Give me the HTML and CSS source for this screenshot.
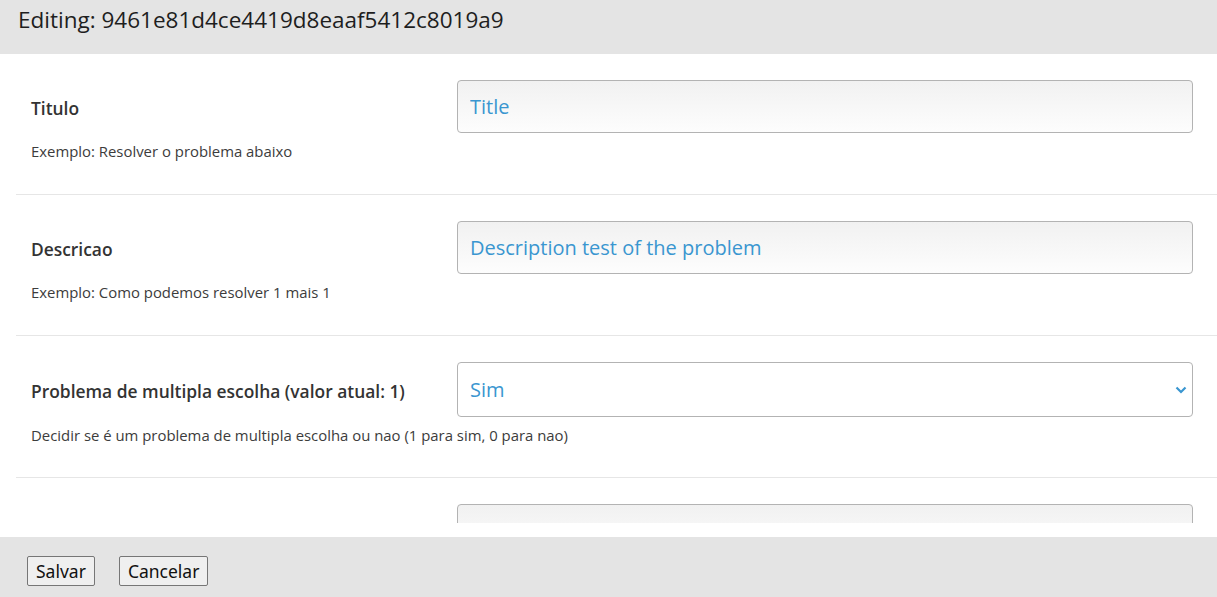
FILE: index.html
```html
<!DOCTYPE html>
<html lang="pt">
<head>
<meta charset="utf-8">
<title>Editing</title>
<link rel="stylesheet" href="styles.css">
</head>
<body>
<div class="page">
  <header class="topbar">Editing: 9461e81d4ce4419d8eaaf5412c8019a9</header>
  <main class="content">
    <div class="row">
      <div class="line">
        <div class="label">Titulo</div>
        <div class="field"><input class="text" type="text" value="Title"></div>
      </div>
      <div class="help">Exemplo: Resolver o problema abaixo</div>
    </div>
    <div class="row">
      <div class="line">
        <div class="label">Descricao</div>
        <div class="field"><input class="text" type="text" value="Description test of the problem"></div>
      </div>
      <div class="help">Exemplo: Como podemos resolver 1 mais 1</div>
    </div>
    <div class="row row-select">
      <div class="line">
        <div class="label">Problema de multipla escolha (valor atual: 1)</div>
        <div class="field">
          <div class="select-wrap">
            <select class="select"><option>Sim</option><option>Nao</option></select>
            <svg class="chev" width="12" height="8" viewBox="0 0 12 8"><path d="M1.5 1.5 L6 6 L10.5 1.5" fill="none" stroke="#3a96d0" stroke-width="2.2"/></svg>
          </div>
        </div>
      </div>
      <div class="help">Decidir se é um problema de multipla escolha ou nao (1 para sim, 0 para nao)</div>
    </div>
    <div class="row">
      <div class="line">
        <div class="label"></div>
        <div class="field"><input class="text" type="text" value=""></div>
      </div>
    </div>
  </main>
  <footer class="actions">
    <button class="btn">Salvar</button>
    <button class="btn">Cancelar</button>
  </footer>
</div>
</body>
</html>
```

FILE: styles.css
```css
html, body {
  margin: 0;
  padding: 0;
  background: #ffffff;
}
body {
  font-family: "Open Sans", "Noto Sans", sans-serif;
  color: #333333;
}
.page {
  display: flex;
  flex-direction: column;
  height: 597px;
  overflow: hidden;
}
.topbar {
  flex: 0 0 54px;
  box-sizing: border-box;
  height: 54px;
  background: #e4e4e4;
  padding: 4px 0 0 18px;
  font-size: 22.5px;
  line-height: 32px;
  color: #1e1e1e;
}
.content {
  flex: 0 0 469px;
  height: 469px;
  overflow: hidden;
  padding-left: 16px;
  margin-bottom: 14px;
}
.row {
  box-sizing: border-box;
  height: 141px;
  padding: 26px 24px 0 0;
  border-bottom: 1px solid #e6e6e6;
}
.row-select {
  height: 142px;
}
.line {
  display: flex;
  align-items: center;
}
.label {
  flex: 0 0 426px;
  padding: 3px 0 0 15px;
  font-size: 17.4px;
  font-weight: 600;
  color: #333333;
}
.field {
  flex: 1 1 auto;
}
.help {
  margin-top: 8px;
  padding-left: 15px;
  font-size: 14.9px;
  line-height: 20px;
  color: #3c3c3c;
}
.text {
  display: block;
  box-sizing: border-box;
  width: 100%;
  height: 53px;
  margin: 0;
  padding: 0 12px;
  border: 1px solid #b3b3b3;
  border-radius: 4px;
  background: linear-gradient(to bottom, #f1f1f1, #fdfdfd);
  font-family: "Open Sans", "Noto Sans", sans-serif;
  font-size: 20px;
  color: #3a96d0;
  outline: none;
}
.select-wrap {
  position: relative;
}
.select {
  display: block;
  box-sizing: border-box;
  width: 100%;
  height: 55px;
  margin: 0;
  padding: 0 12px;
  border: 1px solid #b3b3b3;
  border-radius: 4px;
  background: #ffffff;
  font-family: "Open Sans", "Noto Sans", sans-serif;
  font-size: 20px;
  color: #3a96d0;
  -webkit-appearance: none;
  appearance: none;
  outline: none;
}
.chev {
  position: absolute;
  right: 6px;
  top: 24px;
  pointer-events: none;
}
.actions {
  flex: 0 0 60px;
  box-sizing: border-box;
  height: 60px;
  background: #e4e4e4;
  display: flex;
  align-items: flex-start;
  gap: 24px;
  padding: 19px 0 0 27px;
}
.btn {
  box-sizing: border-box;
  height: 30px;
  padding: 0 8px;
  margin: 0;
  border: 1px solid #767676;
  border-radius: 2px;
  background: #efefef;
  font-family: "Noto Sans", "Open Sans", sans-serif;
  font-size: 17.5px;
  line-height: normal;
  color: #111111;
}
```
